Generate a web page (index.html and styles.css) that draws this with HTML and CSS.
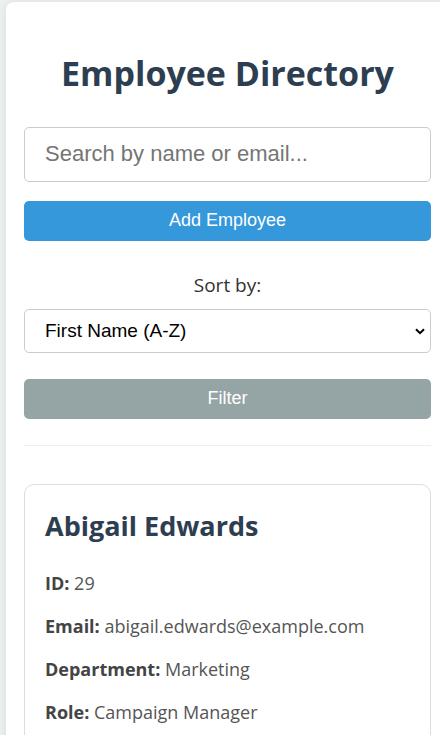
FILE: index.html
```html
<!DOCTYPE html>
<html lang="en">
<head>
<meta charset="utf-8">
<title>Employee Directory</title>
<link rel="stylesheet" href="styles.css">
</head>
<body>
<div class="container">
  <h1 class="title">Employee Directory</h1>
  <div class="controls">
    <input class="search" type="text" placeholder="Search by name or email...">
    <button class="btn btn-add" type="button">Add Employee</button>
    <label class="sort-label" for="sort">Sort by:</label>
    <div class="select-wrap">
      <select id="sort" class="sort">
        <option>First Name (A-Z)</option>
        <option>First Name (Z-A)</option>
        <option>Department</option>
      </select>
      <svg class="chevron" width="10" height="7" viewBox="0 0 10 7"><path d="M1 1.2 L5 5.2 L9 1.2" fill="none" stroke="#000" stroke-width="2"/></svg>
    </div>
    <button class="btn btn-filter" type="button">Filter</button>
  </div>
  <hr class="divider">
  <div class="card">
    <h2 class="name">Abigail Edwards</h2>
    <p class="field"><strong>ID:</strong> 29</p>
    <p class="field"><strong>Email:</strong> abigail.edwards@example.com</p>
    <p class="field"><strong>Department:</strong> Marketing</p>
    <p class="field"><strong>Role:</strong> Campaign Manager</p>
  </div>
</div>
</body>
</html>
```
FILE: styles.css
```css
html, body {
  margin: 0;
  overflow: hidden;
}
body {
  background: #ecf0f1;
  padding: 2px 0 0 6px;
  font-family: "Open Sans", "Noto Sans", sans-serif;
  color: #333;
}
.container {
  box-sizing: border-box;
  width: 443px;
  background: #fff;
  border-radius: 8px;
  box-shadow: 0 0 8px rgba(0,0,0,0.08);
  padding: 18px 18px 40px;
}
.title {
  margin: 33px 0 33px;
  font-size: 34px;
  line-height: 1.2;
  font-weight: 700;
  color: #2c3e50;
  text-align: center;
}
.controls {
  display: flex;
  flex-direction: column;
}
.search {
  box-sizing: border-box;
  height: 55px;
  padding: 0 20px;
  border: 1px solid #ccc;
  border-radius: 5px;
  font-family: "Liberation Sans", Arial, sans-serif;
  font-size: 22px;
  color: #333;
  outline: none;
}
.search::placeholder {
  color: #757575;
}
.btn {
  height: 40px;
  border: none;
  border-radius: 5px;
  color: #fff;
  font-family: "Liberation Sans", Arial, sans-serif;
  font-size: 18px;
  padding: 0;
}
.btn-add {
  margin-top: 19px;
  background: #3498db;
}
.sort-label {
  margin-top: 31px;
  text-align: center;
  font-size: 19px;
  line-height: 26px;
  color: #333;
}
.select-wrap {
  position: relative;
  margin-top: 11px;
}
.sort {
  box-sizing: border-box;
  width: 100%;
  height: 44px;
  padding: 0 20px;
  border: 1px solid #ccc;
  border-radius: 5px;
  background: #fff;
  font-family: "Liberation Sans", Arial, sans-serif;
  font-size: 19px;
  color: #000;
  -webkit-appearance: none;
  appearance: none;
}
.chevron {
  position: absolute;
  right: 6px;
  top: 19px;
}
.btn-filter {
  margin-top: 26px;
  background: #95a5a6;
}
.divider {
  margin: 26px 0 0;
  border: none;
  border-top: 1px solid #eee;
}
.card {
  margin-top: 38px;
  border: 1px solid #ddd;
  border-radius: 10px;
  padding: 20px;
}
.name {
  margin: 5px 0 27px;
  font-size: 27px;
  line-height: 1.2;
  font-weight: 700;
  color: #2c3e50;
}
.field {
  margin: 14px 0;
  font-size: 18px;
  line-height: 28.8px;
  color: #555;
}
.field strong {
  color: #444;
}
```
